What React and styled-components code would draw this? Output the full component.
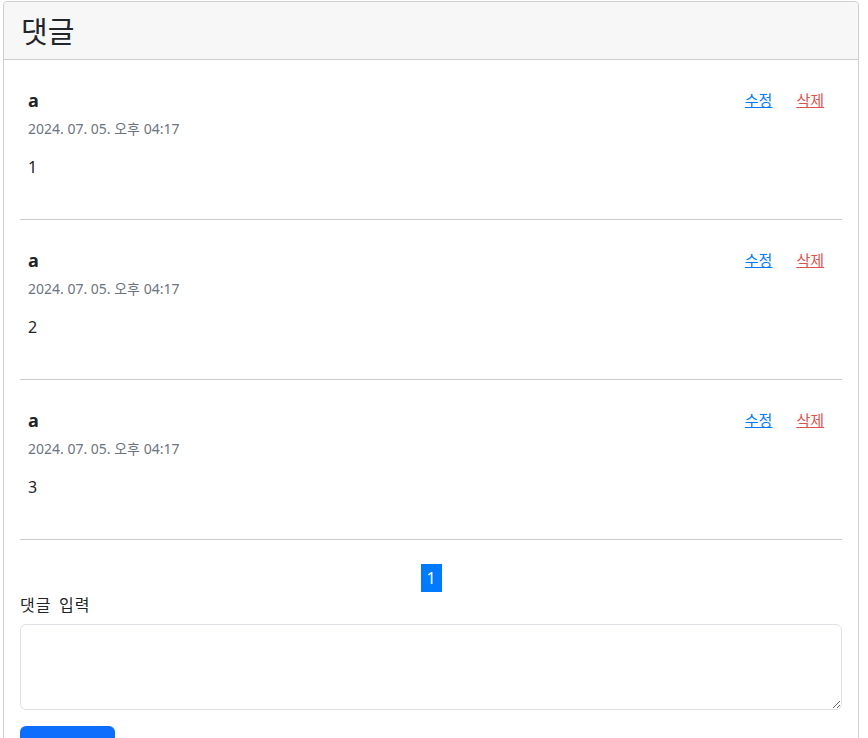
import React from 'react';
import styled, { createGlobalStyle } from 'styled-components';

const GlobalStyle = createGlobalStyle`
  body {
    margin: 0;
    background: #fff;
    font-family: "Noto Sans", "Noto Sans CJK KR", sans-serif;
    color: #212529;
  }
`;

const Page = styled.div`
  padding: 1px 9px 0 3px;
`;

const Card = styled.section`
  border: 1px solid #cfcfcf;
  border-radius: 4px;
  background: #fff;
`;

const CardHeader = styled.header`
  background: #f7f7f7;
  border-bottom: 1px solid #cfcfcf;
  border-radius: 4px 4px 0 0;
  height: 57px;
  padding: 0 17px;
  display: flex;
  align-items: center;
`;

const Title = styled.h2`
  margin: 0;
  font-size: 29px;
  font-weight: 400;
  font-family: "Noto Sans CJK KR", sans-serif;
  line-height: 1;
`;

const CardBody = styled.div`
  padding: 0 16px;
`;

const CommentList = styled.ul`
  list-style: none;
  margin: 0;
  padding: 0;
`;

const CommentItem = styled.li`
  display: flex;
  justify-content: space-between;
  align-items: flex-start;
  padding: 28px 18px 40px 8px;
  border-bottom: 1px solid #cccccc;
`;

const Author = styled.div`
  font-size: 18px;
  font-weight: 700;
  line-height: 24px;
  color: #212529;
`;

const Date = styled.div`
  margin-top: 6px;
  font-size: 14px;
  line-height: 21px;
  color: #6c757d;
`;

const Content = styled.p`
  margin: 16px 0 0;
  font-size: 16px;
  line-height: 24px;
`;

const Actions = styled.div`
  display: flex;
  gap: 24px;
  line-height: 24px;
`;

const ActionLink = styled.a`
  font-size: 15px;
  font-family: "Noto Sans CJK KR", sans-serif;
  color: ${({ $danger }) => ($danger ? '#d9534f' : '#007bff')};
  text-decoration: underline;
  cursor: pointer;
`;

const Pagination = styled.div`
  display: flex;
  justify-content: center;
  margin-top: 24px;
`;

const PageButton = styled.span`
  display: inline-flex;
  align-items: center;
  justify-content: center;
  width: 21px;
  height: 28px;
  background: #007bff;
  color: #fff;
  font-size: 16px;
`;

const Label = styled.label`
  display: block;
  font-size: 16px;
  line-height: 24px;
  letter-spacing: 1px;
  word-spacing: 3px;
  font-family: "Noto Sans CJK KR", sans-serif;
`;

const TextArea = styled.textarea`
  display: block;
  box-sizing: border-box;
  width: 100%;
  height: 86px;
  margin-top: 8px;
  border: 1px solid #dee2e6;
  border-radius: 6px;
  padding: 6px 12px;
  font-size: 16px;
  font-family: inherit;
`;

const SubmitButton = styled.button`
  margin-top: 16px;
  width: 95px;
  height: 38px;
  padding-top: 14px;
  border: none;
  border-radius: 6px;
  background: #0d6efd;
  color: #fff;
  font-size: 16px;
  font-family: "Noto Sans CJK KR", sans-serif;
`;

const comments = [
  { author: 'a', date: '2024. 07. 05. 오후 04:17', content: '1' },
  { author: 'a', date: '2024. 07. 05. 오후 04:17', content: '2' },
  { author: 'a', date: '2024. 07. 05. 오후 04:17', content: '3' },
];

const App = () => {
  return (
    <Page>
      <GlobalStyle />
      <Card>
        <CardHeader>
          <Title>댓글</Title>
        </CardHeader>
        <CardBody>
          <CommentList>
            {comments.map((c, i) => (
              <CommentItem key={i}>
                <div>
                  <Author>{c.author}</Author>
                  <Date>{c.date}</Date>
                  <Content>{c.content}</Content>
                </div>
                <Actions>
                  <ActionLink>수정</ActionLink>
                  <ActionLink $danger>삭제</ActionLink>
                </Actions>
              </CommentItem>
            ))}
          </CommentList>
          <Pagination>
            <PageButton>1</PageButton>
          </Pagination>
          <Label>댓글 입력</Label>
          <TextArea />
          <SubmitButton>댓글 등록</SubmitButton>
        </CardBody>
      </Card>
    </Page>
  );
};

export default App;
